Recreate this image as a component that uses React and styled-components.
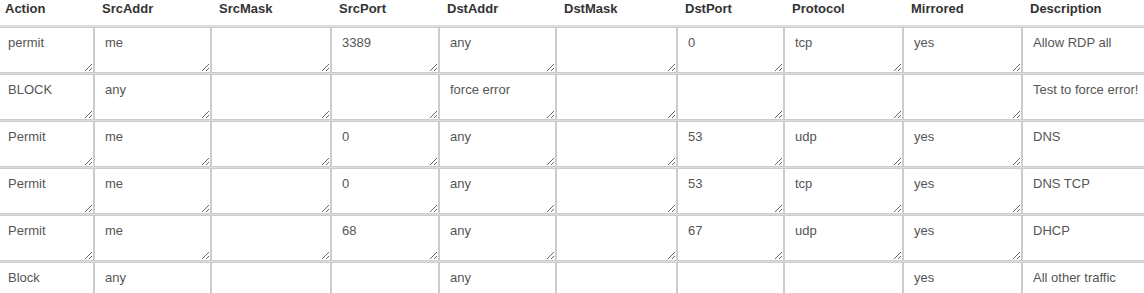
import React from 'react'
import styled, { createGlobalStyle } from 'styled-components'

const GlobalStyle = createGlobalStyle`
  body {
    margin: 0;
    background: #fff;
    overflow: hidden;
    font-family: "Liberation Sans", Arial, sans-serif;
  }
`

const Table = styled.table`
  border-collapse: collapse;
  table-layout: fixed;
  width: 1250px;
  margin-left: -3px;
`

const HeadCell = styled.th`
  text-align: left;
  font-size: 13px;
  font-weight: bold;
  color: #333;
  padding: 1px 8px 9px;
  border-bottom: 2px solid #ddd;
  white-space: nowrap;
`

const Cell = styled.td`
  padding: 0;
  vertical-align: top;
  border-top: 1px solid #ddd;
`

const Field = styled.textarea`
  display: block;
  box-sizing: border-box;
  width: 100%;
  height: 46px;
  margin: 0;
  padding: 7px 10px;
  border: 1px solid #ccc;
  border-radius: 0;
  font-family: "Liberation Sans", Arial, sans-serif;
  font-size: 13px;
  color: #555;
  background: #fff;
  overflow: hidden;
  resize: ${p => (p.$fixed ? 'none' : 'both')};
  outline: none;
`

const columns = [
  { name: 'Action', width: 97 },
  { name: 'SrcAddr', width: 117 },
  { name: 'SrcMask', width: 120 },
  { name: 'SrcPort', width: 108 },
  { name: 'DstAddr', width: 117 },
  { name: 'DstMask', width: 121 },
  { name: 'DstPort', width: 107 },
  { name: 'Protocol', width: 119 },
  { name: 'Mirrored', width: 119 },
  { name: 'Description', width: 225 },
]

const rules = [
  ['permit', 'me', '', '3389', 'any', '', '0', 'tcp', 'yes', 'Allow RDP all'],
  ['BLOCK', 'any', '', '', 'force error', '', '', '', '', 'Test to force error!'],
  ['Permit', 'me', '', '0', 'any', '', '53', 'udp', 'yes', 'DNS'],
  ['Permit', 'me', '', '0', 'any', '', '53', 'tcp', 'yes', 'DNS TCP'],
  ['Permit', 'me', '', '68', 'any', '', '67', 'udp', 'yes', 'DHCP'],
  ['Block', 'any', '', '', 'any', '', '', '', 'yes', 'All other traffic'],
]

const App = () => {
  return (
    <>
      <GlobalStyle />
      <Table>
        <colgroup>
          {columns.map(col => <col key={col.name} style={{ width: col.width }} />)}
        </colgroup>
        <thead>
          <tr>
            {columns.map(col => <HeadCell key={col.name}>{col.name}</HeadCell>)}
          </tr>
        </thead>
        <tbody>
          {rules.map((rule, i) => (
            <tr key={i}>
              {rule.map((value, j) => (
                <Cell key={j}>
                  <Field defaultValue={value} $fixed={j === rule.length - 1} spellCheck={false} />
                </Cell>
              ))}
            </tr>
          ))}
        </tbody>
      </Table>
    </>
  )
}

export default App
